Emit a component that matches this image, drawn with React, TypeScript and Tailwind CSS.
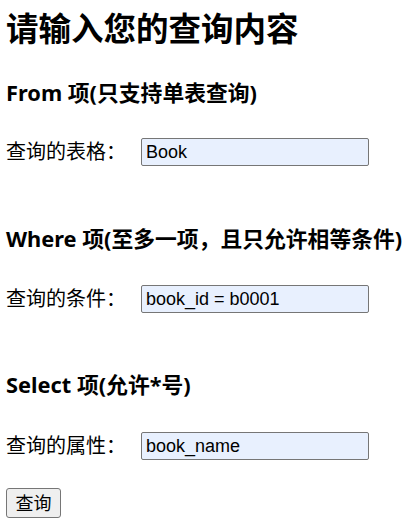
import React from "react";

function Field({ label, value }: { label: string; value: string }) {
  return (
    <div className="flex items-center h-[28px]">
      <span className="w-[135px] shrink-0 text-[20px] leading-[28px] text-black">
        {label}
      </span>
      <input
        readOnly
        value={value}
        className="w-[228px] h-[28px] border border-[#767676] rounded-[2px] bg-[#e8f0fe] px-[4px] text-[18px] text-black outline-none [font-family:'Liberation_Sans',Arial,sans-serif]"
      />
    </div>
  );
}

export default function App() {
  return (
    <div className="bg-white min-h-[525px] px-[6px] [font-family:'Noto_Sans','Noto_Sans_CJK_SC',sans-serif]">
      <h1 className="pt-[9px] text-[32.5px] leading-[40px] font-bold text-black">
        请输入您的查询内容
      </h1>

      {/* From */}
      <h3 className="mt-[30px] text-[21.8px] leading-[28px] font-bold text-black">
        From 项(只支持单表查询)
      </h3>
      <div className="mt-[31px]">
        <Field label="查询的表格：" value="Book" />
      </div>

      {/* Where */}
      <h3 className="mt-[59px] text-[21.8px] leading-[28px] font-bold text-black">
        Where 项(至多一项，且只允许相等条件)
      </h3>
      <div className="mt-[32px]">
        <Field label="查询的条件：" value="book_id = b0001" />
      </div>

      {/* Select */}
      <h3 className="mt-[58px] text-[21.8px] leading-[28px] font-bold text-black">
        Select 项(允许*号)
      </h3>
      <div className="mt-[33px]">
        <Field label="查询的属性：" value="book_name" />
      </div>

      <button className="mt-[28px] w-[55px] h-[30px] border border-[#767676] rounded-[3px] bg-[#efefef] text-[18px] leading-none text-black">
        查询
      </button>
    </div>
  );
}
